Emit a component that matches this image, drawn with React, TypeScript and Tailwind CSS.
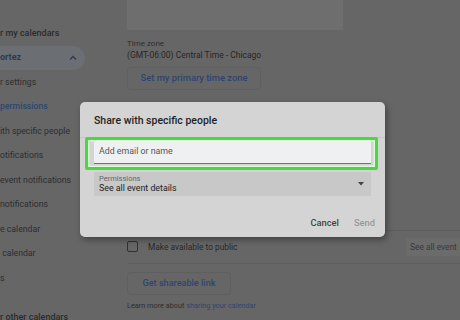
import React from "react";

const sidebarRows = [
  { text: "r my calendars", cls: "font-medium text-[9px] text-[#2c2c2c]" },
  { text: "ortez", cls: "font-bold text-[9px] text-[#2e3b52]", pill: true },
  { text: "r settings", cls: "text-[8.7px] text-[#2e2e2e]" },
  { text: "permissions", cls: "font-medium text-[8.7px] text-[#2c4670]" },
  { text: "ith specific people", cls: "text-[8.7px] text-[#2e2e2e]" },
  { text: "otifications", cls: "text-[8.7px] text-[#2e2e2e]" },
  { text: "event notifications", cls: "text-[8.7px] text-[#2e2e2e]" },
  { text: "notifications", cls: "text-[8.7px] text-[#2e2e2e]" },
  { text: "e calendar", cls: "text-[8.7px] text-[#2e2e2e]" },
  { text: "\u00a0calendar", cls: "text-[8.7px] text-[#2e2e2e]" },
  { text: "s", cls: "text-[8.7px] text-[#2e2e2e]" },
];

const Sidebar = () => (
  <div className="w-[85px] shrink-0 pt-[21px] flex flex-col">
    {sidebarRows.map((r) => (
      <div
        key={r.text}
        className={`h-[24.5px] shrink-0 flex items-center justify-between pr-[6px] whitespace-nowrap ${
          r.pill ? "bg-[#6b6e73] rounded-r-full" : ""
        }`}
      >
        <span className={r.cls}>{r.text}</span>
        {r.pill && (
          <svg width="8" height="6" viewBox="0 0 8 6" className="mr-[2px]">
            <path d="M1 4.5 L4 1.5 L7 4.5" fill="none" stroke="#2e3b52" strokeWidth="1.3" />
          </svg>
        )}
      </div>
    ))}
    <div className="mt-[20px] shrink-0 text-[9px] font-medium text-[#2c2c2c] whitespace-nowrap">
      r other calendars
    </div>
  </div>
);

const Main = () => (
  <div className="flex-1 pl-[42px] flex flex-col">
    <div className="h-[30px] w-[216px] bg-[#6e6e6e]" />
    <div className="mt-[9px] text-[8px] leading-[10px] text-[#2e2e2e]">Time zone</div>
    <div className="text-[8.5px] leading-[12px] text-[#262626]">(GMT-06:00) Central Time - Chicago</div>
    <div className="mt-[6px] h-[23px] w-[134px] border border-[#5f5f5f] rounded-[4px] flex items-center justify-center text-[9.4px] font-medium text-[#2c4670]">
      Set my primary time zone
    </div>
    <div className="h-[140px]" />
    <div className="h-px bg-[#5e5e5e]" />
    <div className="h-[32px] flex items-center justify-between">
      <div className="flex items-center">
        <div className="w-[11px] h-[11px] border-[1.5px] border-[#303030] rounded-[2px]" />
        <span className="ml-[10px] text-[8.4px] text-[#262626]">Make available to public</span>
      </div>
      <div className="h-[18px] w-[54px] bg-[#6b6b6b] flex items-center pl-[4px] text-[8.4px] text-[#3a3a3a] whitespace-nowrap">
        See all event
      </div>
    </div>
    <div className="h-px bg-[#5e5e5e]" />
    <div className="mt-[8px] h-[23px] w-[104px] border border-[#5f5f5f] rounded-[4px] flex items-center justify-center text-[9.1px] font-medium text-[#2c4670]">
      Get shareable link
    </div>
    <div className="mt-[6px] text-[7.3px] text-[#2e2e2e] whitespace-nowrap">
      Learn more about <span className="text-[#2c4670]">sharing your calendar</span>
    </div>
  </div>
);

const Dialog = () => (
  <div className="absolute left-[80px] top-[102px] w-[305px] h-[135px] bg-[#d4d4d4] rounded-[5px] shadow-[2px_3px_6px_rgba(0,0,0,0.35)] flex flex-col">
    <div className="pt-[12px] pl-[14px] h-[35px] text-[10.5px] leading-[14px] font-medium text-[#1f1f1f]">
      Share with specific people
    </div>
    <div className="h-px bg-[#c6c6c6]" />
    <div className="px-[14px] pt-[3px]">
      <div className="relative">
        <div className="absolute -left-[9px] -right-[7px] -top-[4px] -bottom-[6px] border-[3px] border-[#4cd640] rounded-[2px] shadow-[inset_0_0_0_1.5px_rgba(220,255,220,0.8)]" />
        <div className="h-[23px] bg-[#eff0f2] border-b-[1.5px] border-[#5a7996] flex items-center pl-[5px] text-[8.8px] text-[#555]">
          Add email or name
        </div>
      </div>
      <div className="mt-[8px] h-[24px] bg-[#c8c8c8] flex items-center justify-between pl-[5px] pr-[7px]">
        <div className="flex flex-col">
          <span className="text-[7.5px] leading-[9px] text-[#666]">Permissions</span>
          <span className="text-[8.8px] leading-[11px] text-[#222]">See all event details</span>
        </div>
        <svg width="6" height="4" viewBox="0 0 6 4">
          <path d="M0 0 L6 0 L3 3.5 Z" fill="#444" />
        </svg>
      </div>
    </div>
    <div className="flex-1 flex items-center justify-end pr-[10px] gap-[15px] text-[9.3px] font-medium pt-[12px]">
      <span className="text-[#444]">Cancel</span>
      <span className="text-[#9a9a9a]">Send</span>
    </div>
  </div>
);

export default function App() {
  return (
    <div
      className="relative w-[460px] h-[320px] overflow-hidden bg-[#666666] flex"
      style={{ fontFamily: "Roboto, 'Noto Sans', sans-serif" }}
    >
      <Sidebar />
      <Main />
      <Dialog />
    </div>
  );
}
